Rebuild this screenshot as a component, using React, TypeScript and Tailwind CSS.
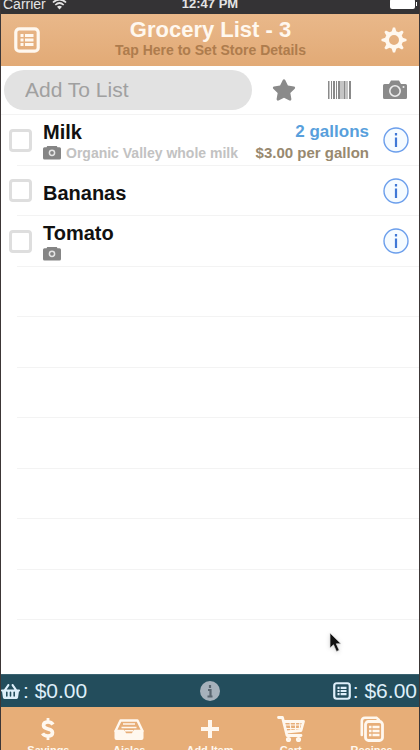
import React from "react";
import { FaStar, FaShoppingBasket } from "react-icons/fa";

type Item = { name: string; note?: string; photo?: boolean; amount?: string; price?: string };

const items: Item[] = [
  { name: "Milk", note: "Organic Valley whole milk", photo: true, amount: "2 gallons", price: "$3.00 per gallon" },
  { name: "Bananas" },
  { name: "Tomato", photo: true },
];

const emptyRows = [0, 1, 2, 3, 4, 5, 6];

function ListIcon({ className }: { className: string }) {
  return (
    <svg viewBox="0 0 26 26" className={className} fill="none" stroke="currentColor" aria-hidden="true">
      <rect x="1.8" y="1.8" width="22.4" height="22.4" rx="3.5" strokeWidth="3.2" />
      <path d="M6.500 8.500h3M6.500 13h3M6.500 17.500h3M11 8.500h8.500M11 13h8.500M11 17.500h8.500" strokeWidth="3.200" />
    </svg>
  );
}

function GearIcon({ className }: { className: string }) {
  return (
    <svg viewBox="0 0 26 26" className={className} fill="currentColor" aria-hidden="true">
      {[0, 45, 90, 135, 180, 225, 270, 315].map((angle) => (
        <path key={angle} d="M10.200 6 L11.900 0.500 H14.100 L15.800 6 Z" transform={`rotate(${angle} 13 13)`} />
      ))}
      <circle cx="13" cy="13" r="7" fill="none" stroke="currentColor" strokeWidth="4" />
    </svg>
  );
}

function WifiIcon({ className }: { className: string }) {
  return (
    <svg viewBox="0 0 15 12" className={className} fill="none" stroke="currentColor" strokeWidth="1.700" aria-hidden="true">
      <path d="M1 4.500Q7.500-1.500 14 4.500M3.300 7Q7.500 3 11.700 7" />
      <path d="M5 8.800Q7.500 6.500 10 8.800L7.500 11.500Z" fill="currentColor" stroke="none" />
    </svg>
  );
}

function BarcodeIcon({ className }: { className: string }) {
  return (
    <svg viewBox="0 0 23 18" className={className} fill="currentColor" aria-hidden="true">
      <path d="M0 0h1.500v18H0zM3 0h1v18H3zM5 0h2v18H5zM8 0h1v18H8zM10 0h2.500v18H10zM13.500 0h1v18h-1zM15.500 0h2v18h-2zM18.500 0h1v18h-1zM21 0h2v18h-2z" />
    </svg>
  );
}

function CameraIcon({ className }: { className: string }) {
  return (
    <svg viewBox="0 0 24 20" className={className} aria-hidden="true">
      <path d="M1.500 4H6L8 .5h8L18 4h4.500Q24 4 24 5.500v12Q24 19 22.500 19h-21Q0 19 0 17.500v-12Q0 4 1.500 4Z" fill="currentColor" />
      <circle cx="12" cy="11" r="5.200" fill="none" stroke="#ececec" strokeWidth="1.600" />
      <circle cx="20.500" cy="7" r="1" fill="#ececec" />
    </svg>
  );
}

function PhotoBadge() {
  return (
    <svg viewBox="0 0 18 14" className="h-[14px] w-[18px] shrink-0" role="img" aria-label="Has photo">
      <path d="M1.500 1.200H3.500L4.200 0h9.600l.7 1.200h2Q18 1.200 18 2.700v9.300Q18 13.500 16.500 13.500h-15Q0 13.500 0 12V2.700Q0 1.200 1.500 1.200Z" fill="#858585" />
      <circle cx="9" cy="6.800" r="2.600" fill="none" stroke="#e4e4e4" strokeWidth="1.500" />
    </svg>
  );
}

function DollarIcon({ className }: { className: string }) {
  return (
    <svg viewBox="0 0 14 24" className={className} fill="none" stroke="currentColor" aria-hidden="true">
      <path d="M12 7.500Q10.500 5 7 5Q2.500 5 2.500 8.300Q2.500 11 7 12Q11.500 13 11.500 15.800Q11.500 19 7 19Q3 19 1.500 16.300" strokeWidth="3.600" />
      <path d="M7 1v5M7 18v5" strokeWidth="2.800" />
    </svg>
  );
}

function TrayIcon({ className }: { className: string }) {
  return (
    <svg viewBox="0 0 30 21" className={className} fill="none" stroke="currentColor" aria-hidden="true">
      <path d="M6.500 1.500h17L28.500 12H20.500L18.500 15.500h-7L9.500 12H1.500Z" strokeWidth="2.400" strokeLinejoin="round" />
      <path d="M0.500 11.500H9.500l2 3.500h7l2-3.500h9v7.500Q29.500 21 27.500 21h-25Q.5 21 .5 19Z" fill="currentColor" stroke="none" />
      <path d="M9 5h12M7.500 8.500h15M11 11.800h8" strokeWidth="1.500" />
    </svg>
  );
}

function PlusIcon({ className }: { className: string }) {
  return (
    <svg viewBox="0 0 18 18" className={className} fill="none" stroke="currentColor" strokeWidth="4" aria-hidden="true">
      <path d="M9 0v18M0 9h18" />
    </svg>
  );
}

function CartIcon({ className }: { className: string }) {
  return (
    <svg viewBox="0 0 28 26" className={className} fill="none" stroke="currentColor" strokeWidth="2.800" strokeLinejoin="round" strokeLinecap="round" aria-hidden="true">
      <path d="M1.500 1.500H5.500L10 19.500H24M7 5.500H26.500L24 14.500L9.500 16" />
      <path d="M8 9h17M9 12.500h15M13 6l1 9M18.500 6v9M23 6l-1 9" strokeWidth="1.100" />
      <circle cx="11.500" cy="23.500" r="1.200" />
      <circle cx="21.500" cy="23.500" r="1.200" />
    </svg>
  );
}

function RecipesIcon({ className }: { className: string }) {
  return (
    <svg viewBox="0 0 24 26" className={className} fill="none" stroke="currentColor" aria-hidden="true">
      <path d="M1.800 19V5Q1.800 1.800 5 1.800H16.500L19 4" strokeWidth="2.600" strokeLinecap="round" />
      <rect x="5.500" y="5.500" width="17" height="19" rx="3" strokeWidth="2.800" />
      <path d="M9 11h2.500M9 15h2.500M9 19h2.500M12.500 11h7M12.500 15h7M12.500 19h7" strokeWidth="2.500" />
    </svg>
  );
}

function InfoIcon() {
  return (
    <svg viewBox="0 0 26 26" className="size-[26px]" aria-hidden="true">
      <circle cx="13" cy="13" r="12" fill="#f5fbff" stroke="#6c9fec" strokeWidth="1.400" />
      <path d="M13 10.500V20M13 6v2.500" stroke="#3f78d6" strokeWidth="2.200" />
    </svg>
  );
}

const rowClass = "ml-4 flex shrink-0 items-center border-b border-[#f3f3f3] odd:h-[51px] even:h-[50px]";

const tabs = [
  { label: "Savings", icon: <DollarIcon className="h-6 w-[14px]" /> },
  { label: "Aisles", icon: <TrayIcon className="h-[21px] w-[30px]" /> },
  { label: "Add Item", icon: <PlusIcon className="size-[18px]" /> },
  { label: "Cart", icon: <CartIcon className="h-[26px] w-[28px]" /> },
  { label: "Recipes", icon: <RecipesIcon className="h-[26px] w-6" /> },
];

export default function App() {
  return (
    <div className="relative flex h-screen flex-col overflow-hidden border-x border-[#3c3636] bg-white font-['Liberation_Sans',Arial,sans-serif]">
      <div className="grid h-[14px] shrink-0 grid-cols-3 content-end items-center overflow-hidden bg-[#343335] pb-[3px] text-[#e4e4e4]">
        <div className="flex items-center gap-[6px] pl-[2px] text-sm leading-[14px]">
          <span>Carrier</span>
          <WifiIcon className="h-[12px] w-[15px]" />
        </div>
        <div className="text-center text-[13px] font-bold leading-[14px]">12:47 PM</div>
        <div className="flex items-center justify-end gap-px pr-[2px]">
          <span className="h-[10px] w-[25px] rounded-[2px] bg-white" />
          <span className="h-1 w-px bg-white" />
        </div>
      </div>

      <header className="flex h-[52px] shrink-0 items-center justify-between bg-linear-to-b from-[#e9b88a] to-[#e2aa76] pl-[13px] pr-3 text-[#fff8ef]">
        <button aria-label="Lists">
          <ListIcon className="size-[26px]" />
        </button>
        <button className="flex flex-col items-center pb-[5px]">
          <span className="text-[22px] font-bold leading-6">Grocery List - 3</span>
          <span className="text-sm font-bold leading-4 text-[#ae7c4d]">Tap Here to Set Store Details</span>
        </button>
        <button aria-label="Settings">
          <GearIcon className="size-[26px]" />
        </button>
      </header>

      <div className="flex h-[49px] shrink-0 items-center border-b border-[#f3f3f3] pl-[3px] pr-3 text-[#8a8a8a]">
        <input
          aria-label="Add To List"
          placeholder="Add To List"
          className="h-10 w-0 min-w-0 grow rounded-full bg-[#e2e2e2] px-[21px] text-[21px] text-[#555] outline-none placeholder:text-[#a0a0a0]"
        />
        <div className="flex w-[155px] shrink-0 items-center justify-between pl-5">
          <button aria-label="Favorites"><FaStar className="size-6" /></button>
          <button aria-label="Scan barcode"><BarcodeIcon className="h-[18px] w-[23px]" /></button>
          <button aria-label="Take photo"><CameraIcon className="h-5 w-6" /></button>
        </div>
      </div>

      <ul className="flex min-h-0 flex-1 flex-col overflow-hidden">
        {items.map((item, index) => (
          <li key={item.name} className={rowClass}>
            <input
              id={`item-${index}`}
              type="checkbox"
              className="-ml-2 size-[23px] shrink-0 appearance-none rounded-[4px] border-[3px] border-[#dedede] bg-white checked:bg-[#4a90d9]"
            />
            <div className="ml-[11px] flex min-w-0 grow flex-col pt-1">
              <label htmlFor={`item-${index}`} className="text-xl font-bold leading-[22px] text-[#111]">{item.name}</label>
              {item.photo && (
                <div className="flex h-5 items-center gap-[5px]">
                  <PhotoBadge />
                  {item.note && <span className="whitespace-nowrap text-sm font-bold text-[#c2c2c2]">{item.note}</span>}
                </div>
              )}
            </div>
            {item.amount && (
              <div className="flex shrink-0 flex-col pt-1 text-right font-bold">
                <span className="text-[17px] leading-[22px] text-[#589fdc]">{item.amount}</span>
                <span className="text-[15px] leading-5 text-[#98896f]">{item.price}</span>
              </div>
            )}
            <button aria-label={`Details for ${item.name}`} className="ml-[14px] mr-[10px] shrink-0">
              <InfoIcon />
            </button>
          </li>
        ))}
        {emptyRows.map((row) => (
          <li key={row} className={rowClass} />
        ))}
      </ul>

      <div className="grid h-[33px] shrink-0 grid-cols-[1fr_auto_1fr] items-center border-t border-[#3a6371] bg-[#234d5c] text-[21px] text-[#deeffa]">
        <div className="flex items-center gap-[3px]">
          <FaShoppingBasket className="size-[19px]" />
          <span>: $0.00</span>
        </div>
        <button aria-label="Totals info">
          <svg viewBox="0 0 20 20" className="size-5" aria-hidden="true">
            <circle cx="10" cy="10" r="10" fill="#a6b1bb" />
            <path d="M10 4v3M8 9h2.500v6M7.500 15.500h5" stroke="#5a6670" strokeWidth="2.200" fill="none" />
          </svg>
        </button>
        <div className="flex items-center justify-end gap-[2px] pr-[2px]">
          <ListIcon className="size-[18px]" />
          <span>: $6.00</span>
        </div>
      </div>

      <nav className="grid h-[43px] shrink-0 grid-cols-5 overflow-hidden bg-[#e7ae78] px-[7px] text-[#fff8ef]">
        {tabs.map((tab) => (
          <button key={tab.label} className="flex flex-col items-center pt-2">
            <span className="flex h-7 items-center">{tab.icon}</span>
            <span className="whitespace-nowrap text-[11px] font-bold leading-[14px]">{tab.label}</span>
          </button>
        ))}
      </nav>

      <svg viewBox="0 0 13 21" className="absolute bottom-[97px] left-[328px] h-[21px] w-[13px] drop-shadow-sm" aria-hidden="true">
        <path d="M1 1V16L4.500 12.800L7.500 19.500L10.200 18.300L7.300 11.800H12Z" fill="#111" stroke="#ddd" strokeWidth="0.700" />
      </svg>
    </div>
  );
}
